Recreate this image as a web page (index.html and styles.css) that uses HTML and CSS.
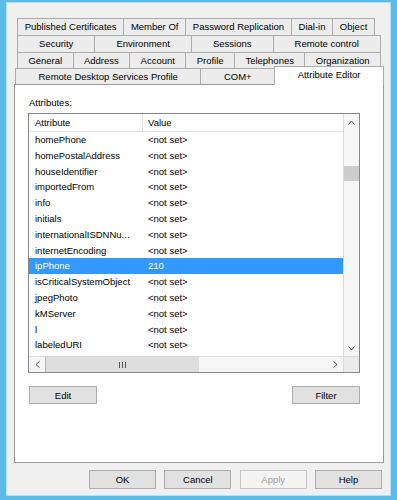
FILE: index.html
```html
<!DOCTYPE html>
<html lang="en">
<head>
    <meta charset="UTF-8">
    <meta name="viewport" content="width=device-width, initial-scale=1.0">
    <title>Properties</title>
    <link rel="stylesheet" href="styles.css">
</head>
<body>
    <div class="window">
        <div class="dialog">
            <div class="tabs">
                <div class="tab-row row1">
                    <div class="tab">Published Certificates</div>
                    <div class="tab">Member Of</div>
                    <div class="tab">Password Replication</div>
                    <div class="tab">Dial-in</div>
                    <div class="tab">Object</div>
                </div>
                <div class="tab-row row2">
                    <div class="tab">Security</div>
                    <div class="tab">Environment</div>
                    <div class="tab">Sessions</div>
                    <div class="tab">Remote control</div>
                </div>
                <div class="tab-row row3">
                    <div class="tab">General</div>
                    <div class="tab">Address</div>
                    <div class="tab">Account</div>
                    <div class="tab">Profile</div>
                    <div class="tab">Telephones</div>
                    <div class="tab">Organization</div>
                </div>
                <div class="tab-row row4">
                    <div class="tab">Remote Desktop Services Profile</div>
                    <div class="tab">COM+</div>
                    <div class="tab active">Attribute Editor</div>
                </div>
            </div>

            <div class="panel">
                <div class="label">Attributes:</div>
                <div class="listview">
                    <div class="list-body">
                        <div class="list-head">
                            <span class="col-attr">Attribute</span>
                            <span class="col-val">Value</span>
                        </div>
                        <div class="list-row"><span class="col-attr">homePhone</span><span class="col-val">&lt;not set&gt;</span></div>
                        <div class="list-row"><span class="col-attr">homePostalAddress</span><span class="col-val">&lt;not set&gt;</span></div>
                        <div class="list-row"><span class="col-attr">houseIdentifier</span><span class="col-val">&lt;not set&gt;</span></div>
                        <div class="list-row"><span class="col-attr">importedFrom</span><span class="col-val">&lt;not set&gt;</span></div>
                        <div class="list-row"><span class="col-attr">info</span><span class="col-val">&lt;not set&gt;</span></div>
                        <div class="list-row"><span class="col-attr">initials</span><span class="col-val">&lt;not set&gt;</span></div>
                        <div class="list-row"><span class="col-attr">internationalISDNNu...</span><span class="col-val">&lt;not set&gt;</span></div>
                        <div class="list-row"><span class="col-attr">internetEncoding</span><span class="col-val">&lt;not set&gt;</span></div>
                        <div class="list-row selected"><span class="col-attr">ipPhone</span><span class="col-val">210</span></div>
                        <div class="list-row"><span class="col-attr">isCriticalSystemObject</span><span class="col-val">&lt;not set&gt;</span></div>
                        <div class="list-row"><span class="col-attr">jpegPhoto</span><span class="col-val">&lt;not set&gt;</span></div>
                        <div class="list-row"><span class="col-attr">kMServer</span><span class="col-val">&lt;not set&gt;</span></div>
                        <div class="list-row"><span class="col-attr">l</span><span class="col-val">&lt;not set&gt;</span></div>
                        <div class="list-row"><span class="col-attr">labeledURI</span><span class="col-val">&lt;not set&gt;</span></div>
                    </div>
                    <div class="vscroll">
                        <div class="sb-btn">
                            <svg width="7" height="5" viewBox="0 0 7 5"><polyline points="0.5,4.5 3.5,1 6.5,4.5" fill="none" stroke="#444" stroke-width="1"/></svg>
                        </div>
                        <div class="vthumb"></div>
                        <div class="sb-space"></div>
                        <div class="sb-btn">
                            <svg width="7" height="5" viewBox="0 0 7 5"><polyline points="0.5,0.5 3.5,4 6.5,0.5" fill="none" stroke="#444" stroke-width="1"/></svg>
                        </div>
                    </div>
                    <div class="hscroll">
                        <div class="sb-btn">
                            <svg width="5" height="7" viewBox="0 0 5 7"><polyline points="4.5,0.5 1,3.5 4.5,6.5" fill="none" stroke="#444" stroke-width="1"/></svg>
                        </div>
                        <div class="hthumb">
                            <svg width="7" height="6" viewBox="0 0 7 6"><path d="M0.5 0v6M3.5 0v6M6.5 0v6" stroke="#555" stroke-width="1"/></svg>
                        </div>
                        <div class="sb-space"></div>
                        <div class="sb-btn">
                            <svg width="5" height="7" viewBox="0 0 5 7"><polyline points="0.5,0.5 4,3.5 0.5,6.5" fill="none" stroke="#444" stroke-width="1"/></svg>
                        </div>
                    </div>
                    <div class="corner"></div>
                </div>
                <div class="panel-buttons">
                    <button class="btn">Edit</button>
                    <button class="btn">Filter</button>
                </div>
            </div>

            <div class="dialog-buttons">
                <button class="btn dlg-btn">OK</button>
                <button class="btn dlg-btn">Cancel</button>
                <button class="btn dlg-btn" disabled>Apply</button>
                <button class="btn dlg-btn">Help</button>
            </div>
        </div>
    </div>
</body>
</html>
```

FILE: styles.css
```css
body {
    margin: 0;
    font-family: "Liberation Sans", Arial, sans-serif;
    font-size: 9.5px;
    color: #000;
}
.window {
    width: 397px;
    height: 500px;
    box-sizing: border-box;
    background: #5cbce8;
    padding: 3px 7px 5px 7px;
}
.dialog {
    height: 100%;
    box-sizing: border-box;
    background: #f0f0f0;
    outline: 1px solid #b3e0f4;
    padding: 15px 6px 0 7px;
}

/* tabs */
.tabs {
    display: flex;
    flex-direction: column;
}
.tab-row {
    display: flex;
    align-items: flex-start;
    height: 17px;
    margin: 0 3px;
}
.row1 {
    margin-right: 9px;
}
.row3,
.row4 {
    height: 16px;
}
.row4 {
    margin: 0 0 0 1px;
}
.tab {
    flex: 1 1 auto;
    height: 100%;
    box-sizing: border-box;
    border: 1px solid #acacac;
    border-bottom: none;
    background: #ececec;
    text-align: center;
    line-height: 16px;
    white-space: nowrap;
}
.tab + .tab {
    margin-left: -1px;
}
.row3 .tab,
.row4 .tab {
    line-height: 15px;
}
.tab.active {
    position: relative;
    z-index: 1;
    height: 19px;
    margin-top: -2px;
    background: #fff;
    line-height: 16px;
}

/* panel */
.panel {
    height: 379px;
    box-sizing: border-box;
    border: 1px solid #9a9a9a;
    background: #fff;
    padding: 10px 0 0 13px;
}
.label {
    line-height: 16px;
    padding-left: 1px;
}
.listview {
    margin-top: 2px;
    width: 332px;
    height: 260px;
    box-sizing: border-box;
    border: 1px solid #828790;
    display: grid;
    grid-template-columns: 1fr 16px;
    grid-template-rows: 1fr 16px;
}
.list-body {
    overflow: hidden;
}
.list-head {
    display: flex;
    height: 18px;
    box-sizing: border-box;
    border-bottom: 1px solid #e5e5e5;
    line-height: 17px;
}
.list-row {
    display: flex;
    height: 15.8px;
    line-height: 15.8px;
}
.list-row.selected {
    background: #3399ff;
    color: #fff;
}
.col-attr {
    width: 114px;
    flex: none;
    box-sizing: border-box;
    padding-left: 6px;
    white-space: nowrap;
    overflow: hidden;
}
.list-head .col-attr {
    border-right: 1px solid #e5e5e5;
}
.col-val {
    padding-left: 5px;
}

/* scrollbars */
.vscroll {
    display: flex;
    flex-direction: column;
    background: #f6f6f6;
    border-left: 1px solid #dadada;
}
.hscroll {
    display: flex;
    background: #f6f6f6;
    border-top: 1px solid #dadada;
}
.sb-btn {
    flex: none;
    width: 16px;
    height: 16px;
    display: flex;
    align-items: center;
    justify-content: center;
}
.vscroll .sb-btn {
    width: auto;
}
.hscroll .sb-btn {
    height: auto;
}
.sb-space {
    flex: 1;
}
.vthumb {
    margin-top: 36px;
    height: 15px;
    background: #cdcdcd;
}
.hthumb {
    width: 154px;
    box-sizing: border-box;
    border-left: 1px solid #b5b5b5;
    background: #dedede;
    display: flex;
    align-items: center;
    justify-content: center;
}
.corner {
    background: #ebebeb;
    border-left: 1px solid #dadada;
    border-top: 1px solid #dadada;
}

/* buttons */
.btn {
    font-family: inherit;
    font-size: 9.5px;
    color: #000;
    padding: 0;
    border: 1px solid #adadad;
    background: #e1e1e1;
}
.btn:disabled {
    color: #a0a0a0;
    background: #f4f4f4;
    border-color: #c6c6c6;
}
.panel-buttons {
    display: flex;
    justify-content: space-between;
    width: 332px;
    margin-top: 13px;
}
.panel-buttons .btn {
    width: 68px;
    height: 18px;
}
.panel-buttons .btn:first-child {
    margin-left: 1px;
}
.dialog-buttons {
    display: flex;
    justify-content: flex-end;
    gap: 8.3px;
    margin-top: 7px;
    padding-right: 2px;
}
.dlg-btn {
    width: 67px;
    height: 19px;
}
```
